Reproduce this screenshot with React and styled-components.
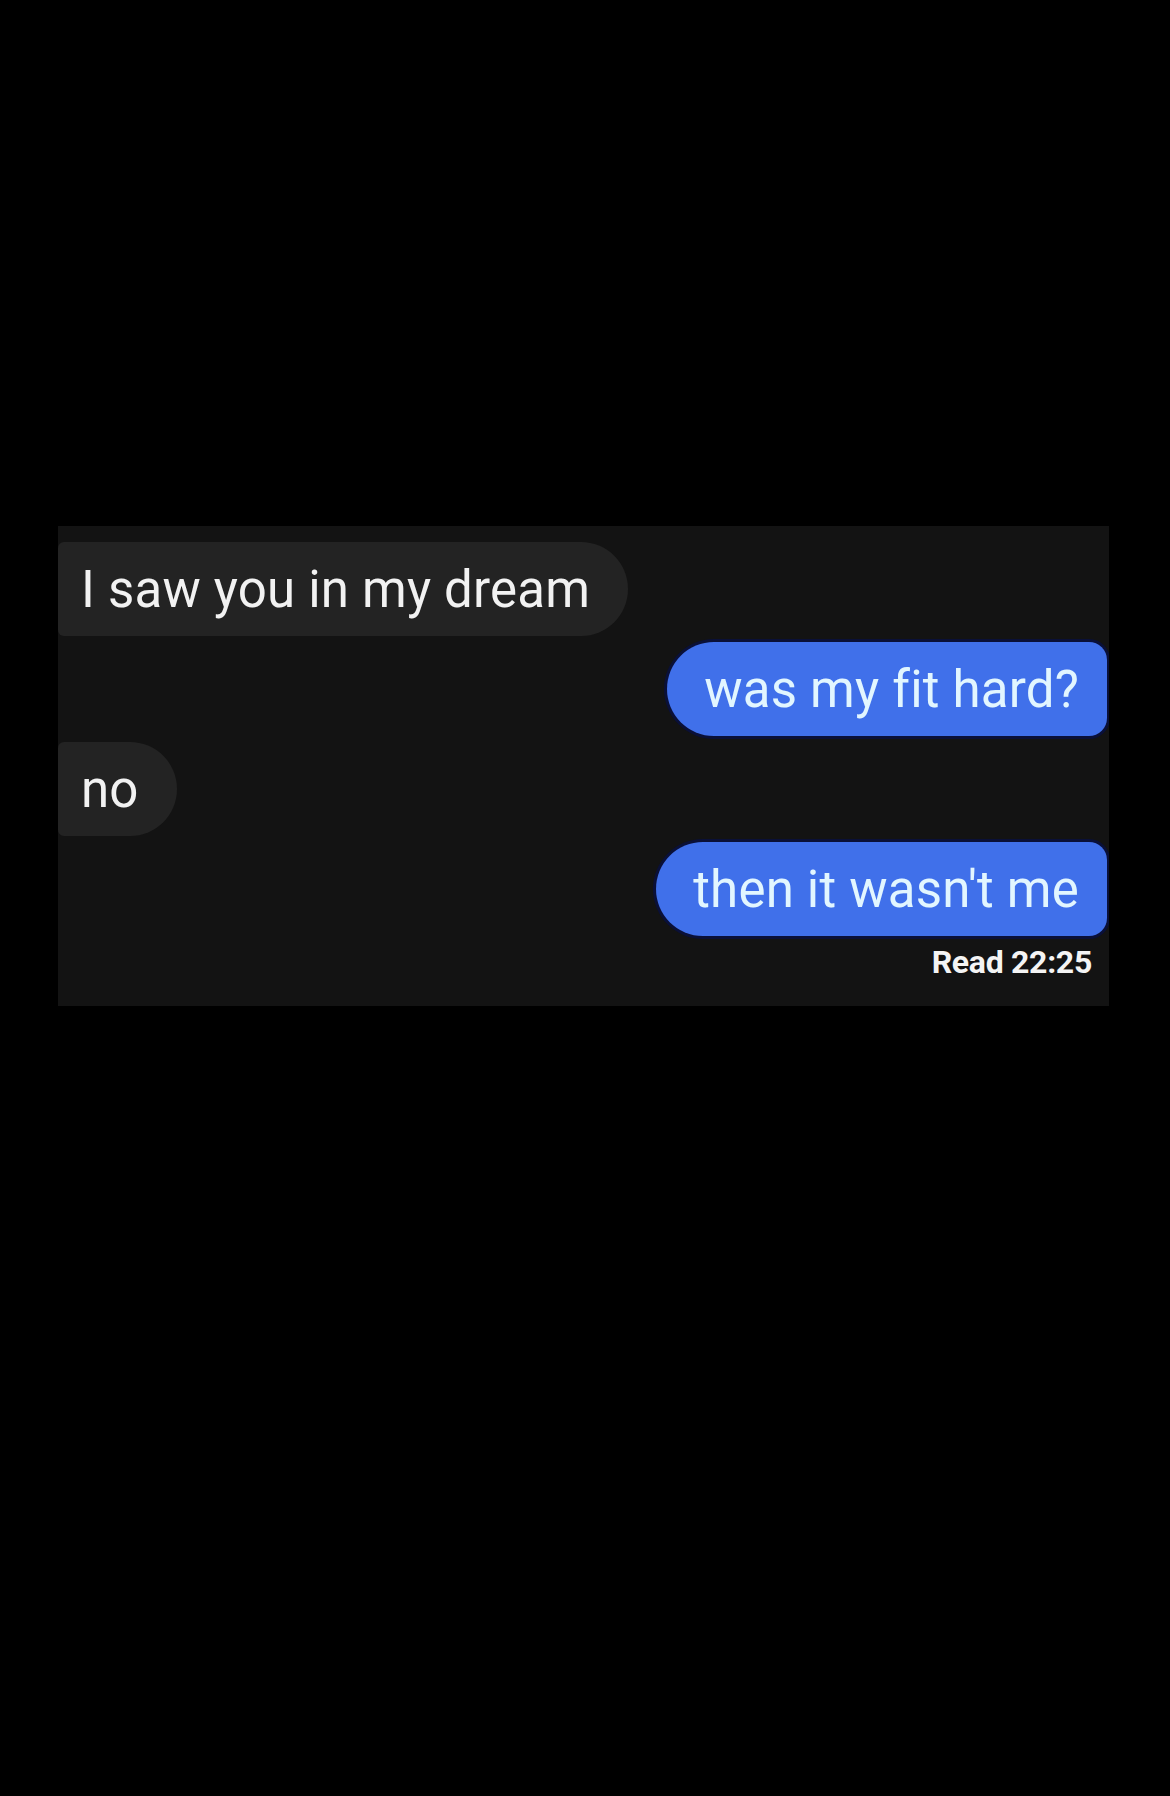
import React from "react";
import styled, { createGlobalStyle } from "styled-components";

const Global = createGlobalStyle`
  html, body {
    margin: 0;
    padding: 0;
    background: #000;
  }
  body {
    font-family: Roboto, "Noto Sans", "Liberation Sans", sans-serif;
  }
`;

const Page = styled.div`
  width: 1170px;
  height: 1796px;
  background: #000;
  padding-top: 526px;
  box-sizing: border-box;
`;

const Thread = styled.div`
  margin-left: 58px;
  width: 1051px;
  height: 480px;
  background: #131313;
  box-sizing: border-box;
  padding-top: 16px;
  display: flex;
  flex-direction: column;
  gap: 6px;
  overflow: hidden;
`;

const Row = styled.div`
  display: flex;
  justify-content: ${(p) => (p.$mine ? "flex-end" : "flex-start")};
`;

const Bubble = styled.div`
  height: 94px;
  display: flex;
  align-items: center;
  box-sizing: border-box;
  font-size: 51px;
  letter-spacing: 0.2px;
  white-space: nowrap;
  ${(p) =>
    p.$mine
      ? `
    background: #4070ea;
    color: #e2f6ff;
    padding: 0 28px 0 37px;
    border-radius: 47px 18px 18px 47px;
    box-shadow: 0 0 0 3px #0a1038;
    margin-right: 2px;
  `
      : `
    background: #232323;
    color: #f2f2f2;
    padding: 0 38px 0 23px;
    border-radius: 6px 47px 47px 6px;
  `}
`;

const Receipt = styled.div`
  align-self: flex-end;
  margin-right: 17px;
  margin-top: 1px;
  color: #f4f4f4;
  font-weight: 700;
  font-size: 32px;
  letter-spacing: -0.3px;
`;

const messages = [
  { text: "I saw you in my dream", mine: false },
  { text: "was my fit hard?", mine: true },
  { text: "no", mine: false },
  { text: "then it wasn't me", mine: true },
];

export default function App() {
  return (
    <>
      <Global />
      <Page>
        <Thread>
          {messages.map((m, i) => (
            <Row key={i} $mine={m.mine}>
              <Bubble $mine={m.mine}>{m.text}</Bubble>
            </Row>
          ))}
          <Receipt>Read 22:25</Receipt>
        </Thread>
      </Page>
    </>
  );
}
